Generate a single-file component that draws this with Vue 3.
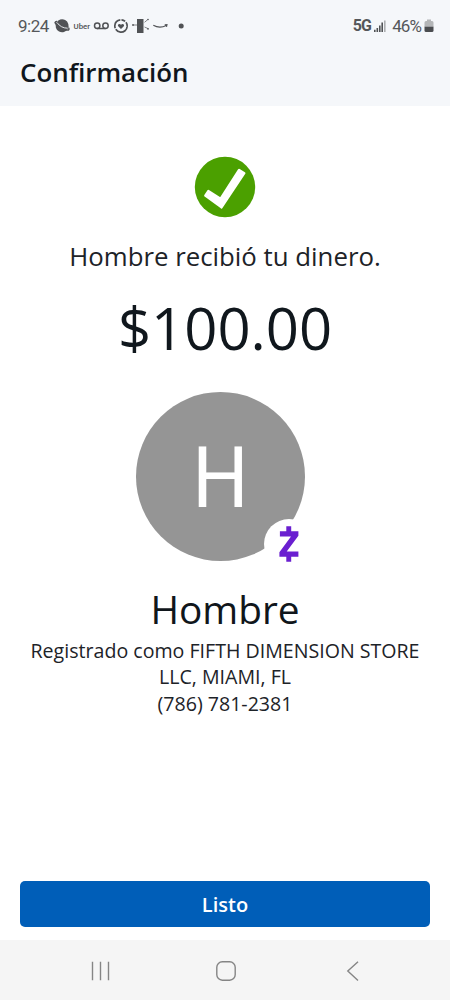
<script setup>
const title = 'Confirmación'
</script>

<template>
  <main class="screen">
    <header class="top">
      <div class="status">
        <span class="clock">9:24</span>
        <svg class="notes" width="140" height="20" viewBox="0 0 140 20" fill="none" stroke="#505255">
          <g transform="rotate(28 12 10)">
            <circle cx="12" cy="9.800" r="6.500" fill="#505255" stroke="none" />
            <path d="M5.500 8.400Q4 9 4.300 10.300Q12 15.500 19.700 10.300Q20 9 18.500 8.400" stroke-width="1.500" />
            <path d="M6 9.300Q12 12.400 18 9.300" stroke="#f5f7fa" stroke-width=".8" />
          </g>
          <text x="23.500" y="12.700" class="uber" textLength="16.500" lengthAdjust="spacingAndGlyphs">Uber</text>
          <g stroke-width="1.500">
            <circle cx="47.200" cy="9.800" r="2.700" />
            <circle cx="55.500" cy="9.800" r="2.700" />
            <path d="M47 12.500h8.500" />
          </g>
          <circle cx="71" cy="10" r="6.200" stroke-width="1.700" stroke-dasharray="15 1.200 11 1.200 4 1.200 4.200 1.200" transform="rotate(5 71 10)" />
          <path d="M71 13l-2.800-2.800c-1.200-1.500 1.100-3.400 2.800-1.500 1.700-1.900 4 0 2.800 1.500z" fill="#505255" stroke="none" />
          <path d="M87 3h6.500v14H87z" fill="#505255" stroke="none" />
          <path d="M83 9h4M94.500 6.300l3.200-2.600M94.500 11l3.400 1.500" stroke-width=".7" />
          <g fill="#505255" stroke="none"><circle cx="83" cy="9" r=".9" /><circle cx="98" cy="3.500" r=".8" /><circle cx="98" cy="12.800" r=".9" /></g>
          <path d="M103.300 9.300q6.500 3.500 13 .1M114.700 8.700l2.300-.1-.5 2.300" stroke-width="1.100" />
          <circle cx="131.200" cy="10" r="2.500" fill="#505255" stroke="none" />
        </svg>
        <span class="network">5G</span>
        <svg class="signal" width="12" height="12" viewBox="0 0 12 12">
          <path d="M0 9.700h1.600V12H0zM2.500 8h1.600v4H2.500zM5 5.500h1.600V12H5zM7.400 2.600H9V12H7.400z" fill="#505255" />
          <path d="M10 .5h1.600V12H10z" fill="#acaeb0" />
        </svg>
        <span class="percent">46%</span>
        <svg class="battery" width="10" height="14" viewBox="0 0 10 14">
          <path d="M3 .5h4V2h1q1.500 0 1.500 1.500V8h-9V3.500Q.5 2 2 2h1z" fill="#b4b6b8" />
          <path d="M.5 7.800h9v3.700q0 1.500-1.500 1.500H2Q.5 13 .5 11.500z" fill="#4b4d50" />
        </svg>
      </div>
      <h1>{{ title }}</h1>
    </header>

    <section class="content">
      <svg class="check" width="62" height="62" viewBox="0 0 62 62">
        <circle cx="31" cy="31" r="30.200" fill="#4ba000" />
        <path d="M14.300 35.100L26.500 42.800L45.100 14L50.300 17.200L27.500 51.400L11.300 39.600Z" fill="#fff" stroke="#fff" stroke-width="2.400" stroke-linejoin="round" />
      </svg>
      <p class="message">Hombre recibió tu dinero.</p>
      <p class="amount">$100.00</p>
      <div class="avatar">
        <span class="initial">H</span>
        <div class="badge">
          <svg width="20" height="36" viewBox="0 0 20 36" fill="#6a1fd0">
            <path d="M7.300.3h4.900v4.900h7.200v4.600L7.700 25.600h11.700v5.200h-7.200v5H7.300v-5H.4v-4.600L12 10.400H.9V5.200h6.400z" />
          </svg>
        </div>
      </div>
      <h2>Hombre</h2>
      <p class="registered">Registrado como FIFTH DIMENSION STORE<br>LLC, MIAMI, FL</p>
      <p class="phone">(786) 781-2381</p>
    </section>

    <footer>
      <button type="button">Listo</button>
    </footer>
    <nav>
      <svg width="20" height="20" viewBox="0 0 20 20"><path d="M1.500.8v18.400M9.500.8v18.400M17.500.8v18.400" /></svg>
      <svg class="home" width="20" height="20" viewBox="0 0 20 20"><rect x=".8" y=".8" width="18.400" height="18.400" rx="5.500" /></svg>
      <svg width="20" height="20" viewBox="0 0 20 20"><path d="M15 .8L4.800 10 15 19.400" /></svg>
    </nav>
  </main>
</template>

<style>
body { margin: 0; }
</style>

<style scoped>
* { box-sizing: border-box; }
.screen {
  width: 450px;
  height: 1000px;
  display: flex;
  flex-direction: column;
  overflow: hidden;
  background: #fff;
  color: #1d2328;
  font-family: "Open Sans", sans-serif;
}
h1, h2, p { margin: 0; font-weight: 400; white-space: nowrap; }
.top { height: 106px; background: #f5f7fa; flex: none; }
.status {
  height: 51px;
  padding: 0 16px 0 18px;
  display: flex;
  align-items: center;
  font: 17px/20px Roboto, sans-serif;
  color: #55575a;
}
.clock { width: 32px; letter-spacing: -.5px; }
.uber { font: 500 7.5px Roboto, sans-serif; fill: #505255; stroke: none; }
.notes { flex: none; }
.network { margin-left: auto; font-size: 16px; font-weight: 700; letter-spacing: -.8px; }
.signal { margin: 0 6px 0 3px; }
.percent { letter-spacing: -.9px; }
.battery { margin-left: 3px; }
h1 {
  padding-left: 20px;
  font-size: 25.9px;
  font-weight: 540;
  line-height: 42px;
  color: #10161d;
}
.content {
  flex: 1;
  display: flex;
  flex-direction: column;
  align-items: center;
}
.check { margin-top: 50px; flex: none; }
.message { margin-top: 20px; font-size: 25.8px; line-height: 36px; }
.amount { margin-top: 14px; font-size: 58px; line-height: 80px; color: #10171d; }
.avatar {
  position: relative;
  flex: none;
  width: 169px;
  height: 169px;
  margin: 24px 9px 0 0;
  border-radius: 50%;
  background: #959595;
  color: #fff;
  font: 85px/169px Roboto, sans-serif;
  text-align: center;
}
.initial {
  display: block;
  padding-top: 2px;
  transform: scaleX(.93);
}
.badge {
  position: absolute;
  left: 128px;
  top: 127px;
  width: 50px;
  height: 50px;
  display: flex;
  align-items: center;
  justify-content: center;
  border-radius: 50%;
  background: #fff;
}
h2 { margin-top: 20px; font-size: 38.8px; line-height: 56px; color: #10161b; }
.registered { margin-top: 1px; font-size: 19.6px; line-height: 26px; text-align: center; }
.phone { font-size: 19.6px; line-height: 28px; }
footer { height: 59px; padding: 0 20px; flex: none; }
button {
  display: block;
  width: 100%;
  height: 46px;
  padding: 1px 0 0;
  border: 0;
  border-radius: 5px;
  background: #005eb8;
  color: #fff;
  font: 540 20px/46px "Open Sans", sans-serif;
}
nav {
  height: 60px;
  padding: 2px 87px 0 91px;
  display: flex;
  align-items: center;
  justify-content: space-between;
  flex: none;
  background: #f5f5f5;
}
nav svg { fill: none; stroke: #858585; stroke-width: 1.4; }
.home { margin-right: 2px; }
</style>
